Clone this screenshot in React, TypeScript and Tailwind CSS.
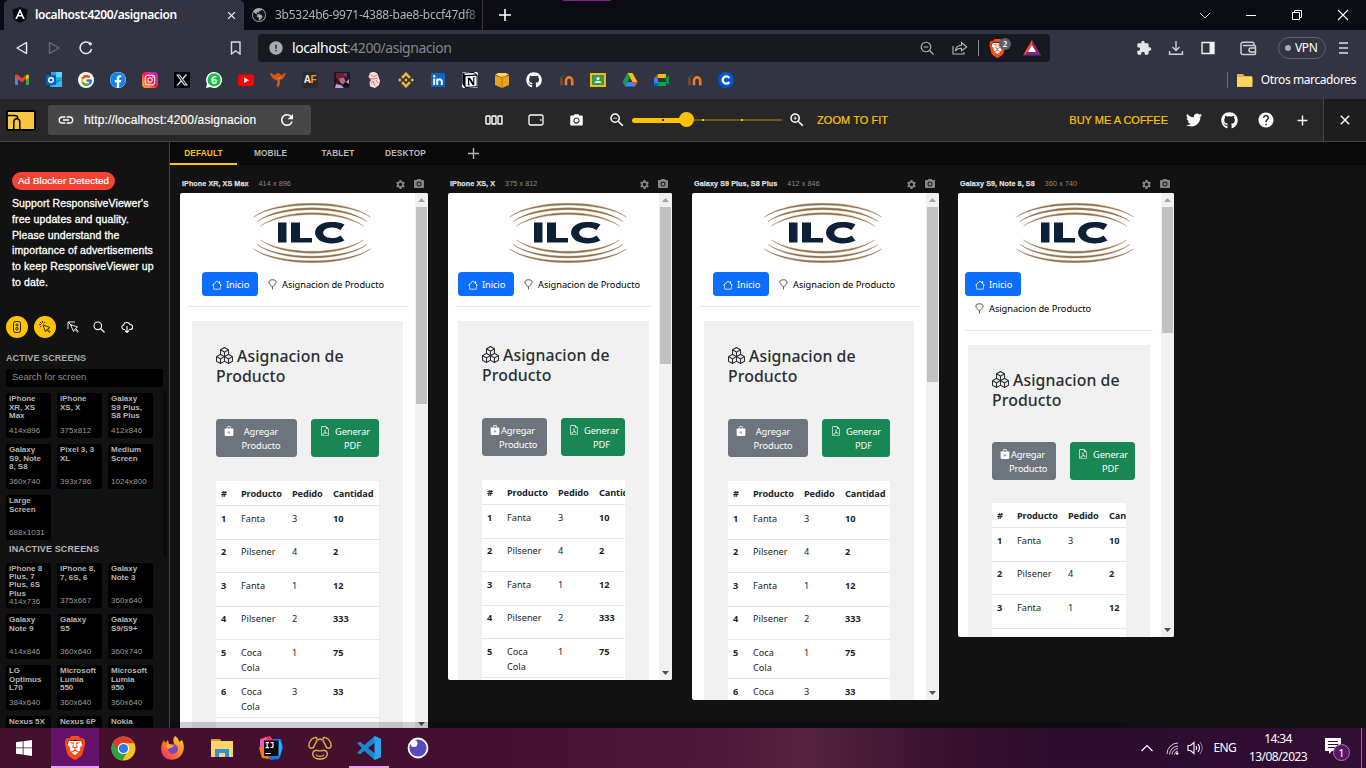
import React from "react";
import {
  MdLink, MdRefresh, MdZoomOut, MdZoomIn, MdPhotoCamera, MdSettings, MdHelp, MdAdd, MdClose, MdExtension, MdError,
} from "react-icons/md";
import { FaTwitter, FaGithub, FaFacebook, FaInstagram, FaYoutube } from "react-icons/fa";
import { FcGoogle } from "react-icons/fc";
import { SiBrave, SiBinance, SiNotion } from "react-icons/si";
import { BsHouse, BsBoxes, BsBagPlusFill, BsFileEarmarkPdf, BsTwitterX, BsGlobeAmericas } from "react-icons/bs";

const segoe = "font-['Noto_Sans','Open_Sans',sans-serif]";
const arial = "font-['Liberation_Sans',Arial,sans-serif]";

/* ---------- brand marks ---------- */

const BraveMark = ({ className }: { className: string }) => (
  <span className={`relative block ${className}`}>
    <svg viewBox="0 0 24 24" className="absolute inset-0 h-full w-full">
      <path d="M6 5h12l2 5-4 9-4 3-4-3-4-9z" fill="#fff" />
    </svg>
    <SiBrave className="absolute inset-0 h-full w-full text-[#fb4a12]" />
  </span>
);

const Moodle = () => (
  <svg viewBox="0 0 16 16" className="h-4 w-4" fill="none">
    <path d="M0 5.500 5.500 3l2 1.500L3 6z" fill="#4a4240" />
    <path d="M3.500 6v7" stroke="#8a4a2a" strokeWidth="2.400" />
    <path d="M8 13.200V8.500a3 3 0 0 1 6.200 0v4.700" stroke="#f07d22" strokeWidth="2.600" />
  </svg>
);

const bookmarks: React.ReactNode[] = [
  <svg viewBox="0 0 16 16" className="h-4 w-4">
    <path d="M1 3h3v10H2a1 1 0 0 1-1-1z" fill="#4285f4" />
    <path d="M12 5h3v7a1 1 0 0 1-1 1h-2z" fill="#34a853" />
    <path d="M1 4.200c0-1.800 2-2 3-1.200l4 3.200L12 3v4L8 10.200 1 5.500z" fill="#ea4335" />
    <path d="M12 3.200c1.500-1.200 3-.4 3 1v1.300L12 8z" fill="#fbbc04" />
  </svg>,
  <svg viewBox="0 0 16 16" className="h-4 w-4">
    <path d="M5 0h11v8H5z" fill="#28a8ea" /><path d="M10 0h6v5h-6z" fill="#50d9ff" />
    <path d="M4 8h12v7H4z" fill="#1490df" /><path d="m4 15 12-7v7z" fill="#35b8f1" />
    <rect y="3" width="10" height="10" rx="1" fill="#0a5fb8" />
    <circle cx="5" cy="8" r="2.300" fill="none" stroke="#fff" strokeWidth="1.400" />
  </svg>,
  <span className="flex h-4 w-4 items-center justify-center rounded-full bg-white"><FcGoogle className="h-[13px] w-[13px]" /></span>,
  <span className="relative block h-4 w-4 rounded-full bg-white"><FaFacebook className="h-4 w-4 text-[#0e83f2]" /></span>,
  <span className="flex h-4 w-4 items-center justify-center rounded-[4px] bg-gradient-to-tr from-[#ffb600] via-[#f5154d] to-[#b800d8]"><FaInstagram className="h-3 w-3 text-white" /></span>,
  <span className="flex h-4 w-4 items-center justify-center bg-black"><BsTwitterX className="h-3 w-3 text-[#dedede]" /></span>,
  <svg viewBox="0 0 16 16" className="h-4 w-4">
    <path d="M8 0a8 8 0 1 1-3.600 15.100L0 16l1-4.200A8 8 0 0 1 8 0z" fill="#fff" /><circle cx="8.100" cy="7.900" r="6.600" fill="#12c143" />
    <text x="8" y="11.600" textAnchor="middle" fontSize="10.500" fontWeight="700" fill="#fff" fontFamily="Noto Sans">6</text>
  </svg>,
  <svg viewBox="0 0 16 16" className="h-4 w-4"><rect y="2.500" width="16" height="11.500" rx="3" fill="#f00" /><path d="M6.200 5.500 11 8.200l-4.800 2.700z" fill="#fff" /></svg>,
  <svg viewBox="0 0 16 16" className="h-4 w-4"><path d="M0 1c3 0 3 2 5 2 1-1 1-2 3-2s2 1 3 2c2 0 2-2 5-2-1 3-2 6-6 7 0 2 .5 4-1.500 7.500L6.500 14l1-5.500C3 8 1 5 0 1z" fill="#cf5416" /><path d="M5 4l3 3 3-3-1 3H7z" fill="#f28b2b" /></svg>,
  <span className={`flex h-4 w-4 items-center justify-center rounded-[3px] bg-[#2b2b2b] text-[10px] font-black leading-none tracking-[-0.500px] ${arial}`}><span className="text-[#eee]">A</span><span className="text-[#f5a028]">F</span></span>,
  <svg viewBox="0 0 16 16" className="h-4 w-4"><path d="M0 0h16v16H0z" fill="#2a1028" /><path d="M2 1h10l2 6-3-2-5 2-4 5z" fill="#6e1e2e" /><path d="M5 6.500l5-1 1.500 4-2.500 3-3-2z" fill="#a5707f" /><path d="M2 12l5 1 3 3H1zM12 10l3-3v5z" fill="#b9a2cc" /><path d="M10 1h3v3h-3z" fill="#375079" /><path d="M0 9l3-3v4zM9 13l4-2 1 4z" fill="#150817" /></svg>,
  <svg viewBox="0 0 16 16" className="h-4 w-4"><path d="M4 1c3-2 8-1 8.500 3.500L14 9l-1 4-4 3-5-1.500-.5-4L5 8 2.500 5z" fill="#f9dede" /><path d="M4.500 3l3 1.500 4-1.500M4 6.500l3 .5 5-1M5 12l2-3 2 5M10 8l2 3" stroke="#dc6668" fill="none" strokeWidth=".9" /></svg>,
  <SiBinance className="h-4 w-4 text-[#f3ba2f]" />,
  <svg viewBox="0 0 16 16" className="h-4 w-4"><rect x="1" y="1" width="14" height="14" rx="1" fill="#0a66c2" /><path d="M4.200 6.500V13M7.300 13V6.500M7.300 9.500c0-2.800 4.500-3 4.500 0V13" stroke="#fff" strokeWidth="1.900" fill="none" /><circle cx="4.200" cy="4.200" r="1.200" fill="#fff" /></svg>,
  <span className="flex h-4 w-4 items-center justify-center rounded-[2px] bg-white"><SiNotion className="h-4 w-4 text-black" /></span>,
  <svg viewBox="0 0 16 16" className="h-4 w-4"><path d="M1 4h14v9l-7 3-7-3z" fill="#e9a11f" /><path d="m1 3 3-2h8l3 2-7 2z" fill="#ffd072" /><path d="M8 5.500V16M1 3.500 8 5.500l7-2" stroke="#a86b0b" fill="none" strokeWidth=".8" /></svg>,
  <FaGithub className="h-4 w-4 text-white" />,
  <Moodle />,
  <svg viewBox="0 0 16 16" className="h-4 w-4"><path d="M0 1h16v14H0z" fill="#f5bb13" /><path d="M2 3h12v10H2z" fill="#359b57" /><circle cx="8" cy="6.500" r="1.600" fill="#fff" /><path d="M4.500 11c0-3 7-3 7 0z" fill="#d3f0db" /></svg>,
  <svg viewBox="0 0 16 16" className="h-4 w-4"><path d="M5.500 1h5l5 9h-5z" fill="#fbbc04" /><path d="M5.500 1 .5 10 3 14.500 8 5.500z" fill="#0f9d58" /><path d="M5.500 10h10L13 14.500H3z" fill="#4285f4" /><path d="M11 10h4.500L13 14.500z" fill="#ea4335" /></svg>,
  <svg viewBox="0 0 16 16" className="h-4 w-4"><path d="M4 2h8v4H4z" fill="#fbbc04" /><path d="M0 6l4-4v4z" fill="#ea4335" /><path d="M0 6h4v5H0z" fill="#2684fc" /><path d="M0 11h4v3H1a1 1 0 0 1-1-1z" fill="#0066da" /><path d="M4 10h8v4H4z" fill="#00ac47" /><path d="M10 6l2 2v3l3 2V3l-3 2z" fill="#00973c" /></svg>,
  <Moodle />,
  <svg viewBox="0 0 16 16" className="h-4 w-4"><circle cx="8" cy="8" r="8" fill="#0056d2" /><path d="M11.300 6a3.600 3.600 0 1 0 0 4" fill="none" stroke="#fff" strokeWidth="2.400" /></svg>,
];

/* ---------- browser chrome ---------- */

function TabStrip() {
  return (
    <div className={`relative flex h-[30px] bg-[#0b0b13] pl-1 ${segoe}`}>
      <div className="absolute left-[563px] top-0 h-px w-[48px] bg-[#861a97]" />
      <div className="flex w-[240px] items-center rounded-t-[5px] bg-[#323443] pl-2">
        <svg viewBox="0 0 16 16" className="h-4 w-4"><path d="m8 0 7.500 2.600-1.200 10L8 16l-6.300-3.400-1.200-10z" fill="#0a0b10" /><path d="M3.200 12 8 1.800 12.800 12h-1.900l-1-2.400H6L5.100 12zM6.800 8.100h2.400L8 5.200z" fill="#fff" fillRule="evenodd" /></svg>
        <span className="ml-[7px] flex-1 whitespace-nowrap text-[12px] font-semibold leading-none tracking-[-0.400px] text-white">localhost:4200/asignacion</span>
        <MdClose className="mr-[6px] h-[13px] w-[13px] text-white" />
      </div>
      <div className="flex w-[239px] items-center border-r border-[#3b3633] pl-2">
        <span className="flex h-[14px] w-[14px] items-center justify-center rounded-full bg-[#15161b]"><BsGlobeAmericas className="h-[14px] w-[14px] text-[#a9abb2]" /></span>
        <span className="ml-[9px] w-[205px] whitespace-nowrap text-[12px] leading-[18px] tracking-[-0.260px] text-[#b2b3ba] [mask-image:linear-gradient(to_right,#000_92%,#0003)]">3b5324b6-9971-4388-bae8-bccf47df8</span>
      </div>
      <div className="flex flex-1 items-center">
        <svg viewBox="0 0 12 12" className="ml-4 h-3 w-3" stroke="#fff" strokeWidth="1.600"><path d="M6 0v12M0 6h12" /></svg>
        <div className="ml-auto mr-[17px] flex items-center gap-[34px]">
          <svg viewBox="0 0 12 12" className="h-3 w-3" stroke="#ccc" fill="none"><path d="m1 4 5 5 5-5" /></svg>
          <svg viewBox="0 0 12 12" className="h-3 w-3" stroke="#fff"><path d="M1 6.500h10" /></svg>
          <svg viewBox="0 0 12 12" className="h-3 w-3" stroke="#fff" fill="none"><path d="M1.500 3.500h7v7h-7zM3.500 3V1.500h7v7H9" /></svg>
          <svg viewBox="0 0 12 12" className="h-3 w-3" stroke="#fff" strokeWidth="1.100"><path d="m1 1 10 10M11 1 1 11" /></svg>
        </div>
      </div>
    </div>
  );
}

function AddressRow() {
  return (
    <div className={`flex h-9 items-center bg-[#323443] ${segoe}`}>
      <svg viewBox="0 0 14 14" className="ml-[15px] h-[14px] w-[14px]" fill="none" stroke="#eee" strokeWidth="1.400" strokeLinejoin="round"><path d="M11.500 1.500v11L2 7z" /></svg>
      <svg viewBox="0 0 14 14" className="ml-[18px] h-[14px] w-[14px]" fill="none" stroke="#6c6d79" strokeWidth="1.400" strokeLinejoin="round"><path d="M2.500 1.500v11L12 7z" /></svg>
      <svg viewBox="0 0 14 14" className="ml-[18px] h-[14px] w-[14px]" fill="none" stroke="#eee" strokeWidth="1.500"><path d="M12.600 8A5.800 5.800 0 1 1 11 2.600" /><circle cx="11.300" cy="2.800" r="1.600" fill="#eee" stroke="none" /></svg>
      <svg viewBox="0 0 12 14" className="ml-[137px] h-[14px] w-3" fill="none" stroke="#ddd" strokeWidth="1.400"><path d="M1.500 1h8.500v12L5.700 9.800 1.500 13z" /></svg>
      <div className="ml-4 flex h-7 w-[792px] items-center rounded-[4px] bg-[#171920] pl-[10px]">
        <MdError className="h-4 w-4 text-[#a9abb2]" />
        <span className="ml-2 text-[14px] leading-none tracking-[-0.460px] text-[#83858d]"><span className="text-white">localhost</span>:4200/asignacion</span>
        <div className="ml-auto flex items-center pr-[9px] text-[#b6b7bc]">
          <svg viewBox="0 0 14 14" className="h-[14px] w-[14px]" fill="none" stroke="currentColor" strokeWidth="1.100"><circle cx="6" cy="6" r="4.800" /><path d="M3.500 6h5M9.500 9.500 13.500 13.500" /></svg>
          <svg viewBox="0 0 16 14" className="ml-[18px] h-[14px] w-4" fill="none" stroke="currentColor" strokeWidth="1.100"><path d="M1 5v8h11v-2M3.500 9.500C4 6 6 4.500 9.500 4.300V1.500L14.700 6 9.500 10V7.300C7 7.300 5.500 7.800 3.500 9.500z" /></svg>
          <span className="ml-[10px] h-4 w-px bg-[#8c8d93]" />
          <span className="relative ml-[9px] block"><BraveMark className="h-[19px] w-[19px]" /><span className="absolute -top-[1px] left-[11px] flex h-[12px] w-[12px] items-center justify-center rounded-full bg-[#5c5f70] text-[8px] font-semibold leading-none text-white">2</span></span>
          <svg viewBox="0 0 18 16" className="ml-[16px] h-4 w-[18px]"><path d="M9 0 0 15.500h18z" fill="#662d91" /><path d="M9 0 0 15.500 5 12 9 5z" fill="#ff4724" /><path d="M9 0v5l4 7 5 3.500z" fill="#9e1f63" /><path d="m9 5 4 7H5z" fill="#fff" /></svg>
        </div>
      </div>
      <div className="ml-[86px] flex items-center text-[#e6e6ea]">
        <MdExtension className="h-4 w-4" />
        <svg viewBox="0 0 16 16" className="ml-4 h-4 w-4" fill="none" stroke="#cfcfd4" strokeWidth="1.400"><path d="M8 1v9M4.500 7 8 10.500 11.500 7M1.500 11v3.300h13V11" /></svg>
        <svg viewBox="0 0 14 14" className="ml-[17px] h-[14px] w-[14px]"><path d="M1 1.500h12v11H1z" fill="none" stroke="#eee" strokeWidth="1.400" /><path d="M8.500 1.500H13v11H8.500z" fill="#eee" /></svg>
        <svg viewBox="0 0 17 15" className="ml-[25px] h-[15px] w-[17px]" fill="none" stroke="#cfcfd4" strokeWidth="1.500"><path d="M3 4.500h11.500a1 1 0 0 1 1 1v7a1 1 0 0 1-1 1H3a2 2 0 0 1-2-2V3.300a2 2 0 0 1 2-2h9.500a1.500 1.500 0 0 1 1.500 1.500V4M16 7h-5a1.900 1.900 0 0 0 0 4h5" /></svg>
      </div>
      <div className="ml-[21px] flex h-[22px] w-[48px] items-center gap-[4px] rounded-full border border-[#5d6070] pl-[6px] text-[12px] tracking-[-0.400px] text-white"><span className="h-[6px] w-[6px] rounded-full bg-[#a7a9bb]" />VPN</div>
      <svg viewBox="0 0 10 12" className="ml-[13px] h-3 w-[10px]" stroke="#e0e0e0" strokeWidth="1.500"><path d="M0 1h9M0 6h9M0 11h9" /></svg>
    </div>
  );
}

function BookmarkRow() {
  return (
    <div className={`flex h-[33px] items-center bg-[#323443] pb-[5px] pl-[14px] ${segoe}`}>
      <div className="flex gap-4">{bookmarks.map((b, i) => <React.Fragment key={i}>{b}</React.Fragment>)}</div>
      <div className="ml-auto flex items-center pr-[10px]">
        <span className="h-4 w-px bg-[#6a6b76]" />
        <svg viewBox="0 0 16 14" className="ml-[9px] h-[14px] w-4"><path d="M0 1h6l1.500 2H15v11H0z" fill="#e8b43a" /><path d="M0 4h15.500v9.500H0z" fill="#ffd75e" /></svg>
        <span className="ml-[8px] whitespace-nowrap text-[12px] leading-none tracking-[-0.400px] text-white">Otros marcadores</span>
      </div>
    </div>
  );
}

/* ---------- viewer toolbar ---------- */

function ViewerBar() {
  return (
    <div className={`flex h-[43px] items-center border-b border-[#444] bg-[#272727] ${arial}`}>
      <svg viewBox="0 0 30 21" className="ml-[6px] h-[21px] w-[30px]"><rect x="1" y="1" width="28" height="19" rx="1.500" fill="#f7c744" stroke="#000" strokeWidth="1.800" /><path d="M2 5.500h6.500q3 0 3.300 2.700M7.800 20v-8q0-3.200 3-3.200t3 3.200v8" fill="none" stroke="#000" strokeWidth="1.500" /></svg>
      <div className="ml-3 flex h-[30px] w-[263px] items-center rounded-[3px] bg-[#474747] pl-[9px] text-white">
        <MdLink className="h-[18px] w-[18px]" />
        <span className="ml-[9px] w-[190px] whitespace-nowrap text-[12px] tracking-[0.130px] [-webkit-text-stroke:0.150px_#fff]">http://localhost:4200/asignacion</span>
        <MdRefresh className="ml-[4px] h-[18px] w-[18px]" />
      </div>
      <svg viewBox="0 0 18 10" className="ml-[174px] h-[10px] w-[18px]" fill="none" stroke="#fff" strokeWidth="1.400"><rect x="1" y="1" width="4" height="8" rx=".5" /><rect x="7" y="1" width="4" height="8" rx=".5" /><rect x="13" y="1" width="4" height="8" rx=".5" /></svg>
      <svg viewBox="0 0 16 12" className="ml-[25px] h-3 w-4" fill="none" stroke="#fff" strokeWidth="1.300"><rect x="1" y="1" width="14" height="10" rx="1.500" /><path d="M12 6h1.500" strokeWidth="1.600" /></svg>
      <MdPhotoCamera className="ml-[25px] h-[15px] w-[15px] text-white" />
      <MdZoomOut className="ml-[24px] h-[18px] w-[18px] text-white" />
      <div className="relative ml-[6px] flex h-[16px] w-[150px] items-center">
        <div className="h-[5px] w-[55px] rounded-l-full bg-[#ffc400]" />
        <div className="h-[2px] flex-1 bg-[#715a12]" />
        <span className="absolute left-[30px] top-[7px] h-[2px] w-[2px] bg-[#222]" />
        <span className="absolute left-[70px] top-[7px] h-[2px] w-[2px] bg-[#ffc400]" />
        <span className="absolute left-[109px] top-[7px] h-[2px] w-[2px] bg-[#ffc400]" />
        <span className="absolute left-[47px] top-[0px] h-[15px] w-[15px] rounded-full bg-[#ffc400]" />
      </div>
      <MdZoomIn className="ml-[6px] h-[18px] w-[18px] text-white" />
      <span className="ml-[11px] w-[90px] whitespace-nowrap text-[11px] tracking-[0.060px] text-[#ffc400] [-webkit-text-stroke:0.200px_#ffc400]">ZOOM TO FIT</span>
      <span className="ml-auto whitespace-nowrap text-[11px] tracking-[-0.010px] text-[#ffc400] [-webkit-text-stroke:0.200px_#ffc400]">BUY ME A COFFEE</span>
      <div className="ml-[18px] flex items-center gap-[19px] pr-[12px] text-white">
        <FaTwitter className="h-4 w-4" />
        <FaGithub className="h-[17px] w-[17px]" />
        <MdHelp className="h-[18px] w-[18px]" />
        <MdAdd className="h-[17px] w-[17px]" />
      </div>
      <div className="flex h-full w-[43px] items-center justify-center border-l border-[#444] bg-[#1d1d1d]"><MdClose className="h-4 w-4 text-white" /></div>
    </div>
  );
}

/* ---------- sidebar ---------- */

type Screen = [string[], string];
const active: Screen[] = [
  [["iPhone", "XR, XS", "Max"], "414x896"], [["iPhone", "XS, X"], "375x812"], [["Galaxy", "S9 Plus,", "S8 Plus"], "412x846"],
  [["Galaxy", "S9, Note", "8, S8"], "360x740"], [["Pixel 3, 3", "XL"], "393x786"], [["Medium", "Screen"], "1024x800"],
  [["Large", "Screen"], "688x1031"],
];
const inactive: Screen[] = [
  [["iPhone 8", "Plus, 7", "Plus, 6S", "Plus"], "414x736"], [["iPhone 8,", "7, 6S, 6"], "375x667"], [["Galaxy", "Note 3"], "360x640"],
  [["Galaxy", "Note 9"], "414x846"], [["Galaxy", "S5"], "360x640"], [["Galaxy", "S9/S9+"], "360x740"],
  [["LG", "Optimus", "L70"], "384x640"], [["Microsoft", "Lumia", "550"], "360x640"], [["Microsoft", "Lumia", "950"], "360x640"],
  [["Nexus 5X"], ""], [["Nexus 6P"], ""], [["Nokia", "8110 4G"], ""],
];

function Cards({ items }: { items: Screen[] }) {
  return (
    <div className="grid grid-cols-[45px_45px_45px] gap-[6px]">
      {items.map(([name, size], i) => (
        <div key={i} className="flex h-[45px] flex-col justify-between rounded-[3px] bg-black px-[3px] pb-[3px] pt-[2px] text-[8px] leading-[8.300px] text-[#b5b5b5]">
          <div className={`font-bold tracking-[-0.020px] ${name.length > 3 ? "" : "pt-[0.500px]"}`}>{name.map((l) => <div key={l} className="whitespace-nowrap">{l}</div>)}</div>
          <div className="text-[8px] leading-[8px] tracking-[0.080px] text-[#9b9b9b]">{size}</div>
        </div>
      ))}
    </div>
  );
}

function Sidebar() {
  return (
    <aside className={`relative h-[586px] w-[170px] shrink-0 overflow-hidden border-r border-[#444] bg-[#121212] pl-[6px] pt-[30px] ${arial}`}>
      <div className="ml-[6px] flex h-[18px] w-[103px] items-center justify-center whitespace-nowrap rounded-full bg-[#f44336] text-[9.800px] tracking-[0.100px] text-white [-webkit-text-stroke:0.200px_#fff]">Ad Blocker Detected</div>
      <p className="ml-[6px] mt-[6px] whitespace-nowrap text-[10.500px] leading-[15.800px] tracking-[0.110px] text-white [-webkit-text-stroke:0.300px_#fff]">
        Support ResponsiveViewer's<br />free updates and quality.<br />Please understand the<br />importance of advertisements<br />to keep ResponsiveViewer up<br />to date.
      </p>
      <div className="mt-[25px] flex h-[22px] items-center">
        <span className="flex h-[22px] w-[22px] items-center justify-center rounded-full bg-[#ffc400]">
          <svg viewBox="0 0 12 12" className="h-3 w-3" fill="none" stroke="#2b2300"><rect x="2.500" y=".5" width="7" height="11" rx="2" /><circle cx="6" cy="4" r="1" /><circle cx="6" cy="7.800" r="1.300" /></svg>
        </span>
        <span className="ml-[6px] flex h-[22px] w-[22px] items-center justify-center rounded-full bg-[#ffc400]">
          <svg viewBox="0 0 12 12" className="h-3 w-3" fill="none" stroke="#2b2300" strokeWidth=".9"><path d="m4 4 7 2.500L8.500 8l2.800 2.800-.8.700L7.800 8.700 6.500 11zM3.500 0v2M0 3.500h2M1 1l1.500 1.500M6 1 5 2.500M1 6l1.500-1" /></svg>
        </span>
        <svg viewBox="0 0 12 12" className="ml-[11px] h-3 w-3" fill="none" stroke="#fff" strokeWidth=".9"><path d="M1 8V1h7M1 1l4 4M3.500 3.500l7 2.500L8.500 7.500l2.800 2.800-.8.700L7.700 8.300 6.500 10.500z" /></svg>
        <svg viewBox="0 0 12 12" className="ml-[14px] h-3 w-3" fill="none" stroke="#fff" strokeWidth="1.100"><circle cx="4.800" cy="4.800" r="3.800" /><path d="m7.500 7.500 4 4" /></svg>
        <svg viewBox="0 0 12 12" className="ml-[16px] h-3 w-3" fill="none" stroke="#fff" strokeWidth="1.100"><path d="M4 8.500H3A2.300 2.300 0 0 1 2.500 4 3.500 3.500 0 0 1 9 3.500a2.500 2.500 0 0 1 .3 5H8M6 5v6.500M4 9.500l2 2 2-2" /></svg>
      </div>
      <div className="mt-[14px] text-[9px] font-bold leading-[12px] tracking-[0.080px] text-[#a8a8a8]">ACTIVE SCREENS</div>
      <div className="mb-[6px] mt-[5px] flex h-[18px] w-[157px] items-center rounded-[3px] bg-black pl-[6px] pb-[2px] text-[9.500px] tracking-[-0.050px] text-[#8f8f8f]">Search for screen</div>
      <Cards items={active} />
      <div className="mb-[8px] ml-[3px] mt-[3px] text-[9px] font-bold leading-[12px] tracking-[0.130px] text-[#b5b5b5]">INACTIVE SCREENS</div>
      <Cards items={inactive} />
      <div className="absolute left-[163px] top-[248px] h-[167px] w-[4px] rounded-full bg-[#0b0b0b]" />
    </aside>
  );
}

/* ---------- device previews ---------- */

function IlcLogo() {
  return (
    <svg viewBox="0 0 118 60" className="h-[60px] w-[118px]">
      <g fill="#93734d" stroke="#93734d" strokeWidth=".35">
        <path d="M.5 14C25-4.500 93-4.500 117.500 14 93-2 25-2 .5 14z" />
        <path d="M4 18.500C28 .2 90 .2 114 18.500 90 2.700 28 2.700 4 18.500z" />
        <path d="M7.500 23C31 5.200 87 5.200 110.500 23 87 7.700 31 7.700 7.500 23z" />
        <path d="M.5 46C25 64.300 93 64.300 117.500 46 93 61.800 25 61.800.5 46z" />
        <path d="M4 41.500C28 59.600 90 59.600 114 41.500 90 57.100 28 57.100 4 41.500z" />
        <path d="M7.500 37C31 54.600 87 54.600 110.500 37 87 52.100 31 52.100 7.500 37z" />
      </g>
      <g fill="#0d2038">
        <path d="M25 19.500h8.500v20H25zM38 19.500h9V35h12v4.500H38z" />
        <path d="M91.500 21.500 87.500 27c-3-2-6-2.700-9-2.500-11 .5-11 10 0 10.500 3 .2 6-.5 9-2.500l4 5c-4 2.300-9 3-14 2.900-20-.5-21-20.800 0-21.400 5-.1 10 .3 14 2.500z" />
      </g>
    </svg>
  );
}

const Pin = () => (
  <svg viewBox="0 0 10 12" className="mr-[5px] h-[11px] w-[9px]" fill="none" stroke="#333" strokeWidth=".9"><path d="M5 8.500C3 7 1 5.500 1 3.300 1 1.500 2.500.8 5 .8s4 .7 4 2.500C9 5.500 7 7 5 8.500zM5 8.500v3" /></svg>
);

const rows: [string, string[], string, string][] = [
  ["1", ["Fanta"], "3", "10"], ["2", ["Pilsener"], "4", "2"], ["3", ["Fanta"], "1", "12"], ["4", ["Pilsener"], "2", "333"],
  ["5", ["Coca", "Cola"], "1", "75"], ["6", ["Coca", "Cola"], "3", "33"],
];

interface DeviceProps {
  name: string; size: string; frame: string; screen: string; nav: string; rule: string; box: string; count: number;
  agregar: string; generar: string; table: string; thumb: string; label: string; stacked?: boolean; tight?: boolean;
}

function Device(p: DeviceProps) {
  return (
    <section className={`shrink-0 ${p.frame}`}>
      <header className={`flex h-[18px] items-center pl-[2px] pr-[3px] text-[7.200px] leading-none text-[#8a8a8a] ${arial}`}>
        <span className={`whitespace-nowrap font-bold text-[#dedede] [-webkit-text-stroke:0.250px_#dedede] ${p.label}`}>{p.name}</span>
        <span className="ml-[10px] whitespace-nowrap tracking-[0.090px]">{p.size}</span>
        <MdSettings className="ml-auto h-[11px] w-[11px] text-[#858585]" />
        <MdPhotoCamera className="ml-[7px] h-[12px] w-[12px] text-[#858585]" />
      </header>
      <div className={`flex overflow-hidden rounded-[2px] bg-white ${p.screen} ${segoe}`}>
        <div className="min-w-0 flex-1">
          <div className={`pt-[10px] ${p.nav}`}>
            <div className="ml-[51px] h-[60px] w-[118px]"><IlcLogo /></div>
            <div className={p.stacked ? "mt-[9px]" : "mt-[9px] flex"}>
              <div className="flex h-[24px] w-[56px] items-center rounded-[3.500px] bg-[#0d6efd] pl-[10px] pt-px text-[9.300px] tracking-[-0.100px] text-white"><BsHouse className="mr-[4px] h-[10px] w-[10px]" />Inicio</div>
              <div className={`flex h-[24px] items-center whitespace-nowrap pt-px text-[9.300px] tracking-[-0.060px] text-black ${p.stacked ? "pl-[10px]" : "ml-[10px]"}`}><Pin />Asignacion de Producto</div>
            </div>
          </div>
          <div className={`mt-[10px] h-px bg-[#e7e7e8] ${p.rule}`} />
          <div className={`mt-[14px] h-[420px] bg-[#f1f1f1] pl-6 ${p.box}`}>
            <h1 className={`whitespace-nowrap text-[15.800px] font-medium leading-[20px] tracking-[0.080px] text-[#2a2e33] ${p.tight && !p.stacked ? "pt-[24px]" : "pt-[25px]"}`}>
              <BsBoxes className="mr-[4px] inline-block h-[17px] w-[17px] align-[-2px]" />Asignacion de<br />Producto
            </h1>
            <div className={`flex gap-[14px] text-[9.300px] leading-[14px] tracking-[-0.100px] text-white ${p.stacked ? "mt-[32px]" : "mt-[33px]"}`}>
              <div className={`flex h-[38px] rounded-[3.500px] bg-[#6c757d] pl-[8px] pt-[6px] ${p.agregar}`}>
                <BsBagPlusFill className="mt-px h-[10px] w-[10px] shrink-0" />
                {p.tight
                  ? <div className="whitespace-nowrap pl-[1px] tracking-[-0.200px]">Agregar<p className="-ml-[2px]">Producto</p></div>
                  : <div className="ml-[6px] w-[42px] text-center"><p>Agregar</p>Producto</div>}
              </div>
              <div className={`flex h-[38px] rounded-[3.500px] bg-[#198754] pt-[6px] ${p.generar}`}>
                <BsFileEarmarkPdf className="mt-px h-[10px] w-[10px] shrink-0" />
                <div className="ml-[4px] w-[36px] text-right">Generar<p className="pr-[9px] text-right">PDF</p></div>
              </div>
            </div>
            <div className={`overflow-hidden bg-white text-[9.200px] leading-[15px] text-[#212529] ${p.table} ${p.stacked ? "mt-[23px]" : "mt-6"}`}>
              <div className="grid h-[25px] grid-cols-[20px_51px_41px_50px] items-center whitespace-nowrap border-b border-[#e3e6e9] pl-[5px] font-bold tracking-[-0.100px]">
                <span>#</span><span>Producto</span><span>Pedido</span><span>Cantidad</span>
              </div>
              {rows.slice(0, p.count).map(([n, prod, ped, cant]) => (
                <div key={n} className={`grid grid-cols-[20px_51px_41px_50px] border-b border-[#e6e7e8] pl-[5px] pt-[4.500px] ${prod.length > 1 ? "h-[39px]" : "h-[33.600px]"}`}>
                  <b>{n}</b><span>{prod.map((t) => <div key={t}>{t}</div>)}</span><span>{ped}</span><b>{cant}</b>
                </div>
              ))}
              <div className="h-[30px]" />
            </div>
          </div>
        </div>
        <div className="flex w-[13px] shrink-0 flex-col items-center bg-[#f1f1f1]">
          <svg viewBox="0 0 7 4" className="mt-[5px] h-[4px] w-[7px]"><path d="M0 4 3.500 0 7 4z" fill="#a3a3a3" /></svg>
          <div className={`mt-[5px] w-[11px] bg-[#c1c1c1] ${p.thumb}`} />
          <svg viewBox="0 0 7 4" className="mb-[5px] mt-auto h-[4px] w-[7px]"><path d="M0 0h7L3.500 4z" fill="#505050" /></svg>
        </div>
      </div>
    </section>
  );
}

function Stage() {
  return (
    <main className="relative h-[586px] min-w-0 flex-1 overflow-hidden bg-[#121212]">
      <div className={`flex h-[23px] bg-[#0a0a0a] text-[8.300px] font-bold tracking-[0.150px] text-[#b9b9b9] ${arial}`}>
        <span className="flex w-[67px] items-center justify-center border-b-2 border-[#ffc400] pt-px text-[#ffc400]">DEFAULT</span>
        <span className="flex w-[67px] items-center justify-center pb-px">MOBILE</span>
        <span className="flex w-[68px] items-center justify-center pb-px">TABLET</span>
        <span className="flex w-[67px] items-center justify-center pb-px">DESKTOP</span>
        <span className="flex w-[69px] items-center justify-center"><svg viewBox="0 0 11 11" className="h-[11px] w-[11px]" stroke="#b5b5b5" strokeWidth="1.400"><path d="M5.500 0v11M0 5.500h11" /></svg></span>
      </div>
      <div className="flex pl-[10px] pt-[10px]">
        <Device name="iPhone XR, XS Max" size="414 x 896" label="tracking-[0.060px]" frame="w-[248px]" screen="h-[538px]" nav="pl-[22px]" rule="ml-[7px] w-[221px]" box="ml-[12px] w-[211px]"
          count={6} agregar="w-[81px]" generar="w-[68px] pl-[9px]" table="w-[163px]" thumb="h-[197px]" />
        <Device tight name="iPhone XS, X" size="375 x 812" label="tracking-[0.060px]" frame="ml-[20px] w-[224px]" screen="h-[487px]" nav="pl-[10px]" rule="ml-[7px] w-[197px]" box="ml-[10px] w-[191px]"
          count={5} agregar="w-[65px]" generar="w-[64px] pl-[8px]" table="w-[143px]" thumb="h-[157px]" />
        <Device name="Galaxy S9 Plus, S8 Plus" size="412 x 846" label="tracking-[0.080px]" frame="ml-[20px] w-[247px]" screen="h-[507px]" nav="pl-[21px]" rule="ml-[7px] w-[221px]" box="ml-[12px] w-[210px]"
          count={6} agregar="w-[80px]" generar="w-[68px] pl-[9px]" table="w-[162px]" thumb="h-[175px]" />
        <Device stacked tight name="Galaxy S9, Note 8, S8" size="360 x 740" label="tracking-[0.080px]" frame="ml-[19px] w-[216px]" screen="h-[444px]" nav="pl-[7px]" rule="ml-[7px] w-[188px]" box="ml-[10px] w-[182px]"
          count={4} agregar="w-[64px]" generar="w-[65px] pl-[8px]" table="w-[134px]" thumb="h-[126px]" />
      </div>
      <div className="absolute bottom-0 left-0 h-[6px] w-[957px] bg-[#00000030]" />
    </main>
  );
}

/* ---------- taskbar ---------- */

function Taskbar() {
  return (
    <footer className={`flex h-10 items-center bg-[linear-gradient(90deg,#45102e_0%,#45102f_35%,#4d1839_52%,#54243f_59%,#35102c_70%,#2b0b2d_78%,#330d35_100%)] ${segoe}`}>
      <svg viewBox="0 0 16 16" className="ml-4 h-4 w-4" fill="#fff"><path d="M0 2.300 6.700 1.300v6.200H0zM7.500 1.200 16 0v7.500H7.500zM0 8.300h6.700v6.300L0 13.700zM7.500 8.300H16V16l-8.500-1.200z" /></svg>
      <div className="ml-[19px] flex h-10 w-12 items-center justify-center border-b-2 border-[#e9a2f3] bg-[#65136a] pt-[2px]"><BraveMark className="h-6 w-6" /></div>
      <svg viewBox="0 0 24 24" className="ml-[12px] h-[25px] w-[25px]"><circle cx="12" cy="12" r="11.500" fill="#fbc116" /><path d="M2 6.200A11.500 11.500 0 0 0 11 23.500L16.500 14 12 12z" fill="#2fa04c" /><path d="M2 6.200 7.500 14.500 12 7H22A11.500 11.500 0 0 0 2 6.200z" fill="#df3b2d" /><circle cx="12" cy="12" r="5.600" fill="#fff" /><circle cx="12" cy="12" r="4.400" fill="#2b7de0" /></svg>
      <svg viewBox="0 0 24 24" className="ml-[25px] h-6 w-6"><defs><linearGradient id="fx" x1="1" y1="0" x2=".2" y2="1"><stop stopColor="#ffe03f" /><stop offset=".5" stopColor="#ff8a22" /><stop offset="1" stopColor="#fb2f5e" /></linearGradient></defs><path d="M14 0c3 2 4 4 4 6l3-2c3 6 2 12-1 15.500-5 6-14 5.500-18 0C-1 14 0 9 3 4l1 3 3-3 1 4 5 0c-1-3-1-6 1-8z" fill="url(#fx)" /><circle cx="12" cy="13" r="5" fill="#7a46c9" /><path d="M5 9c4-2 5 1 8 0 0 3-4 2-5 4-2-1-3-2-3-4z" fill="#ffa52c" /></svg>
      <svg viewBox="0 0 22 20" className="ml-[26px] h-5 w-[22px]"><path d="M0 1h9l2 3H0z" fill="#db9c15" /><path d="M0 3h22v16H0z" fill="#ffd568" /><path d="M4 11h14v8h-4v-4H8v4H4z" fill="#2d92d9" /></svg>
      <svg viewBox="0 0 24 24" className="ml-[26px] h-6 w-6"><path d="m1 3 10-3 5 7-5 16-8-2z" fill="#fe315d" /><path d="m0 12 6-6 4 17-7-1z" fill="#f97a12" /><path d="m14 3 8 0 2 9-4 11-9 1z" fill="#087cfa" /><path d="M1 4l6-3 1 8-7 3z" fill="#ee58c6" /><path d="M20 3l3 6-2 12-2-3z" fill="#25b6f5" /><path d="M5 4.500h14.500V20H5z" fill="#0b0610" /><path d="M6.500 6.700h3.500M8.200 6.700v5M6.500 11.700h3.500M11.500 6.700H14v3.700q0 1.500-2.500 1M6.500 17.500H12" stroke="#fff" strokeWidth="1.200" fill="none" /></svg>
      <svg viewBox="0 0 24 24" className="ml-[25px] h-6 w-6" fill="none" stroke="#dfb343" strokeWidth="1.400"><path d="M5.500 11.500C.5 14 0 9 2 5.500 4 2 8 .5 9 2.500c1 2-1.500 3.500-3.500 9zM18.500 11.500c5 2.500 5.500-2.500 3.500-6C20 2 16 .5 15 2.500c-1 2 1.500 3.500 3.500 9z" /><path d="M9.500 4c1.500-1 3.500-1 5 0M7 14.500C3.500 16 4 21 8.500 22.500c2.500.7 5 .7 7 0 4.500-1.500 5-6.500 1.500-8-2-.8-3 .5-5 .5s-3-1.300-5-.5zM8 18.500c1.500 2.500 6.500 2.500 8 0" /></svg>
      <div className="ml-[17px] flex h-10 w-10 items-center justify-center border-b-2 border-[#e9a2f3] pt-[1px]"><svg viewBox="0 0 24 24" className="h-6 w-6"><path fillRule="evenodd" d="M17.500 0 24 3v18l-6.500 3L7.500 15 3 18.300 0 17l4.800-5L0 7l3-1.300L7.500 9zM18 6.500 11 12l7 5.500z" fill="#1a86d2" /><path d="M17.500 0 24 3v18l-6.500 3z" fill="#29a3ee" /></svg></div>
      <svg viewBox="0 0 22 22" className="ml-[18px] h-[22px] w-[22px]"><circle cx="11" cy="11" r="9.500" fill="#5849be" stroke="#fff" strokeWidth="1.800" /><circle cx="7" cy="6.500" r="3.500" fill="#fff" /></svg>
      <div className="ml-auto flex items-center text-white">
        <svg viewBox="0 0 12 8" className="h-2 w-3" fill="none" stroke="#fff" strokeWidth="1.200"><path d="m.5 7 5.500-5.500L11.500 7" /></svg>
        <svg viewBox="0 0 13 13" className="ml-[13px] h-[13px] w-[13px]" fill="none" stroke="#ddd" strokeWidth=".9"><path d="M1 12A11 11 0 0 1 12 1M3.500 12.500A9 9 0 0 1 12 4M6 12.500a6.500 6.500 0 0 1 6-6M8.500 12.500A4 4 0 0 1 12 9" /><circle cx="11.200" cy="11.500" r="1.200" fill="#fff" stroke="none" /></svg>
        <svg viewBox="0 0 16 14" className="ml-2 h-[14px] w-4" fill="none" stroke="#fff" strokeWidth="1.100"><path d="M1 4.500h2.500L7 1.500v11L3.500 9.500H1zM9 5q1.500 2 0 4M11 3q3 4 0 8" /><path d="M13 1q4.500 6 0 12" stroke="#8c6e8e" /></svg>
        <span className="ml-[11px] text-[12px] leading-none tracking-[-0.700px]">ENG</span>
        <div className="ml-[12px] w-[60px] whitespace-nowrap text-center text-[12px] leading-[18px] tracking-[-0.600px]">14:34<br />13/08/2023</div>
        <span className="relative ml-[17px] block h-5 w-[26px]"><svg viewBox="0 0 16 16" className="h-4 w-4"><path d="M0 0h16v13H7l-3 3v-3H0z" fill="#fff" /><path d="M3 3.500h10M3 6.500h10M3 9.500h7" stroke="#310c36" /></svg><span className="absolute left-[8px] top-[6px] flex h-[17px] w-[17px] items-center justify-center rounded-full border border-[#a57cab] bg-[#59176a] text-[11px] leading-none">1</span></span>
        <span className="ml-[10px] mr-[4px] h-10 w-px bg-[#89698c]" />
      </div>
    </footer>
  );
}

export default function App() {
  return (
    <div className="flex h-[768px] w-[1366px] flex-col overflow-hidden bg-[#121212]">
      <TabStrip />
      <AddressRow />
      <BookmarkRow />
      <ViewerBar />
      <div className="flex h-[586px]">
        <Sidebar />
        <Stage />
      </div>
      <Taskbar />
    </div>
  );
}
